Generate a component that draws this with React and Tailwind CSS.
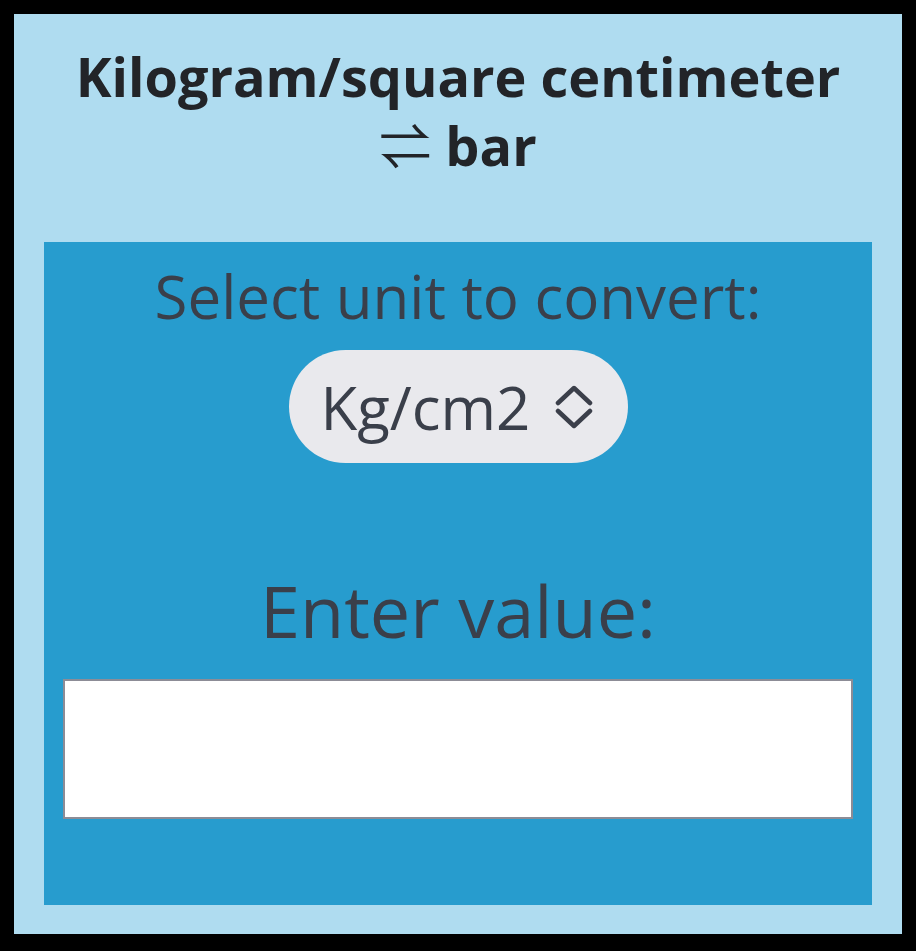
import React from "react";

function ChevronUpDown() {
  return (
    <svg width="40" height="44" viewBox="0 0 40 44" fill="none" stroke="#3b3f4a" strokeWidth="4.5" strokeLinecap="round" strokeLinejoin="round">
      <polyline points="4,18 20,3 36,18" />
      <polyline points="4,26 20,41 36,26" />
    </svg>
  );
}

export default function App() {
  return (
    <div className="w-[916px] h-[951px] bg-black pt-[14px] pl-[14px] pr-[14px] pb-[17px]" style={{ fontFamily: '"Open Sans", "Noto Sans", sans-serif' }}>
      <div className="h-full bg-[#afdcf0] px-[30px] pb-[29px] flex flex-col">
        <h1 className="text-center font-bold text-[#222428] text-[54px] leading-[68px] pt-[28px] h-[228px] shrink-0">
          Kilogram/square centimeter
          <br />
          <span className="font-normal text-[52px] mr-[14px]" style={{ fontFamily: '"Noto Sans CJK JP", sans-serif' }}>⇌</span>
          bar
        </h1>
        <div className="flex-1 bg-[#279cce] px-[19px] flex flex-col items-center">
          <p className="text-[60px] leading-[80px] text-[#3a3f4a] mt-[14px]">Select unit to convert:</p>
          <div className="mt-[14px] h-[113px] w-[339px] rounded-full bg-[#e9e9ed] flex items-center pl-[32px] gap-[24px]">
            <span className="text-[60px] leading-[80px] text-[#3a3f4a]">Kg/cm2</span>
            <ChevronUpDown />
          </div>
          <p className="text-[72px] leading-[90px] text-[#3a3f4a] mt-[102px]">Enter value:</p>
          <input type="text" className="mt-[24px] w-full h-[140px] shrink-0 bg-white border-2 border-[#8c8c96] outline-none" />
        </div>
      </div>
    </div>
  );
}
